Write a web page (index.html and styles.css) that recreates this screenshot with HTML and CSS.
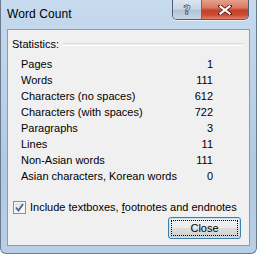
FILE: index.html
```html
<!DOCTYPE html>
<html>
<head>
<meta charset="utf-8">
<link rel="stylesheet" href="styles.css">
</head>
<body>
<div class="window">
  <div class="titlebar">
    <div class="title">Word Count</div>
    <div class="caption-buttons">
      <div class="cap help"><span>?</span></div>
      <div class="cap close">
        <svg width="14" height="10" viewBox="0 0 14 10"><path d="M2 1 L12 9 M12 1 L2 9" stroke="#5a1a10" stroke-width="3.6" stroke-linecap="square"/><path d="M2.5 1.5 L11.5 8.5 M11.5 1.5 L2.5 8.5" stroke="#fff" stroke-width="2.2" stroke-linecap="square"/></svg>
      </div>
    </div>
  </div>
  <div class="client">
    <div class="group-head">
      <span class="group-label">Statistics:</span>
      <span class="group-line"></span>
    </div>
    <div class="stats">
      <div class="row"><span>Pages</span><span>1</span></div>
      <div class="row"><span>Words</span><span>111</span></div>
      <div class="row"><span>Characters (no spaces)</span><span>612</span></div>
      <div class="row"><span>Characters (with spaces)</span><span>722</span></div>
      <div class="row"><span>Paragraphs</span><span>3</span></div>
      <div class="row"><span>Lines</span><span>11</span></div>
      <div class="row"><span>Non-Asian words</span><span>111</span></div>
      <div class="row"><span>Asian characters, Korean words</span><span>0</span></div>
    </div>
    <div class="check-row">
      <span class="checkbox">
        <svg width="9" height="9" viewBox="0 0 9 9"><path d="M1 4.5 L3.5 7.5 L8 1" fill="none" stroke="#4a5f97" stroke-width="1.8"/></svg>
      </span>
      <span class="check-label">Include textboxes, <u>f</u>ootnotes and endnotes</span>
    </div>
    <div class="button-row">
      <div class="button"><span class="focus">Close</span></div>
    </div>
  </div>
</div>
</body>
</html>
```

FILE: styles.css
```css
html, body {
  margin: 0;
  padding: 0;
  background: #ffffff;
}
body {
  width: 257px;
  height: 254px;
  overflow: hidden;
  font-family: "Liberation Sans", Arial, sans-serif;
}
.window {
  width: 257px;
  height: 254px;
  box-sizing: border-box;
  border: 1px solid #6b7b8f;
  border-top: none;
  border-radius: 0 0 6px 6px;
  background: linear-gradient(to bottom, #c7daee 0%, #bcd3ea 30%, #afc9e3 70%, #b9cfe6 100%);
  display: flex;
  flex-direction: column;
  padding: 0 6px 7px 6px;
}
.titlebar {
  height: 29px;
  display: flex;
  align-items: flex-start;
  position: relative;
}
.title {
  font-size: 12px;
  color: #000;
  padding-top: 7px;
  letter-spacing: 0.1px;
}
.caption-buttons {
  margin-left: auto;
  margin-right: 1px;
  display: flex;
  height: 19px;
  border: 1px solid #4f5e75;
  border-top: none;
  border-radius: 0 0 5px 5px;
  overflow: hidden;
  box-shadow: 0 1px 0 rgba(255,255,255,0.6);
}
.cap {
  height: 19px;
  display: flex;
  align-items: center;
  justify-content: center;
}
.help {
  width: 28px;
  background: linear-gradient(to bottom, #dbe5f0 0%, #c9d6e4 45%, #b3c3d6 55%, #c8d7e7 100%);
  border-right: 1px solid #5f6e84;
}
.help span {
  font-family: "DejaVu Sans", sans-serif;
  font-weight: bold;
  font-size: 13px;
  color: #eef3f8;
  -webkit-text-stroke: 0.8px #4b5b70;
  line-height: 1;
}
.close {
  width: 46px;
  background: linear-gradient(to bottom, #e6a08c 0%, #d77a62 40%, #c4402a 55%, #cc4e34 80%, #e2826a 100%);
}
.client {
  flex: 1;
  background: #f0f0f0;
  border: 1px solid #8d9cad;
  display: flex;
  flex-direction: column;
  font-size: 11px;
  color: #000;
}
.group-head {
  display: flex;
  align-items: center;
  margin-top: 7px;
  padding-left: 4px;
  padding-right: 6px;
  height: 13px;
}
.group-label {
  margin-right: 4px;
}
.group-line {
  flex: 1;
  height: 1px;
  border-top: 1px solid #d5dfe5;
  border-bottom: 1px solid #ffffff;
  margin-top: 1px;
}
.stats {
  margin-top: 6px;
  padding-left: 13px;
  width: 192px;
  display: flex;
  flex-direction: column;
}
.row {
  display: flex;
  justify-content: space-between;
  height: 16px;
  line-height: 16px;
}
.check-row {
  display: flex;
  align-items: center;
  margin-top: 15px;
  padding-left: 5px;
  height: 16px;
}
.checkbox {
  width: 11px;
  height: 11px;
  border: 1px solid #8e8f8f;
  background: linear-gradient(135deg, #dcdcdc 0%, #f4f4f4 60%, #ffffff 100%);
  box-shadow: inset 0 0 0 1px #f5f5f5;
  display: flex;
  align-items: center;
  justify-content: center;
  margin-right: 4px;
}
.check-label u {
  text-decoration: underline;
}
.button-row {
  display: flex;
  justify-content: flex-end;
  margin-top: 2px;
  padding-right: 8px;
}
.button {
  width: 73px;
  height: 22px;
  box-sizing: border-box;
  border: 1px solid #3c7fb1;
  border-radius: 3px;
  background: linear-gradient(to bottom, #f2f2f2 0%, #ebebeb 48%, #dddddd 52%, #cfcfcf 100%);
  box-shadow: inset 0 0 0 1px #c4e5f6;
  padding: 2px;
  display: flex;
}
.focus {
  flex: 1;
  border: 1px dotted #000;
  display: flex;
  align-items: center;
  justify-content: center;
  font-size: 11px;
}
```
